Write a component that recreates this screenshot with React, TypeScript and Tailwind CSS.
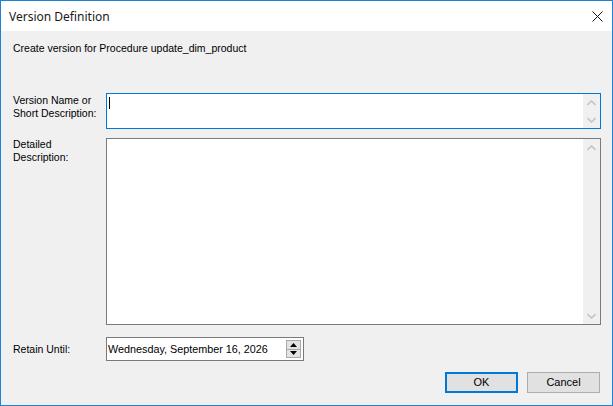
import React from "react";

function Chevron({ up }: { up?: boolean }) {
  return (
    <svg width="9" height="6" viewBox="0 0 9 6" className="block">
      <path
        d={up ? "M0.5 5 L4.5 1 L8.5 5" : "M0.5 1 L4.5 5 L8.5 1"}
        fill="none"
        stroke="#c5c5c5"
        strokeWidth="1.6"
      />
    </svg>
  );
}

function ScrollBar() {
  return (
    <div className="w-[17px] bg-[#f0f0f0] flex flex-col justify-between">
      <div className="h-[17px] flex items-center justify-center">
        <Chevron up />
      </div>
      <div className="h-[17px] flex items-center justify-center">
        <Chevron />
      </div>
    </div>
  );
}

export default function App() {
  return (
    <div className="w-[613px] h-[406px] flex flex-col border border-[#1883d7] bg-[#f0f0f0] text-black font-['Liberation_Sans',Arial,sans-serif] text-[10.5px] leading-[13px]">
      <div className="h-[30px] bg-white flex items-center justify-between pl-[8px] pr-[9px]">
        <span className="font-['Noto_Sans',sans-serif] text-[12px] text-[#1a1a1a]">
          Version Definition
        </span>
        <svg width="11" height="11" viewBox="0 0 11 11">
          <path d="M0.5 0.5 L10.5 10.5 M10.5 0.5 L0.5 10.5" stroke="#111" strokeWidth="1" />
        </svg>
      </div>

      <div className="flex flex-col pl-[12px]">
        <p className="mt-[11px]">Create version for Procedure update_dim_product</p>

        <div className="mt-[38px] flex">
          <div className="w-[93px] pt-[1px]">
            Version Name or
            <br />
            Short Description:
          </div>
          <div className="w-[495px] h-[36px] bg-white border border-[#0078d7] flex">
            <div className="flex-1 pl-[2px] pt-[3px]">
              <div className="w-px h-[12px] bg-black" />
            </div>
            <ScrollBar />
          </div>
        </div>

        <div className="mt-[9px] flex">
          <div className="w-[93px]">
            Detailed
            <br />
            Description:
          </div>
          <div className="w-[495px] h-[187px] bg-white border border-[#7a7a7a] flex">
            <div className="flex-1" />
            <ScrollBar />
          </div>
        </div>

        <div className="mt-[12px] flex items-center">
          <div className="w-[93px]">Retain Until:</div>
          <div className="w-[198px] h-[24px] bg-white border border-[#7a7a7a] flex items-center pl-[1px] pr-[2px]">
            <span className="flex-1 text-[10.8px]">Wednesday, September 16, 2026</span>
            <div className="w-[15px] h-[18px] border border-[#a8a8a8] flex flex-col">
              <div className="flex-1 bg-[#e3e3e3] border-b border-[#a8a8a8] flex items-center justify-center">
                <svg width="7" height="4" viewBox="0 0 7 4">
                  <path d="M0 4 L3.5 0 L7 4 Z" fill="#000" />
                </svg>
              </div>
              <div className="flex-1 bg-[#e3e3e3] flex items-center justify-center">
                <svg width="7" height="4" viewBox="0 0 7 4">
                  <path d="M0 0 L3.5 4 L7 0 Z" fill="#000" />
                </svg>
              </div>
            </div>
          </div>
        </div>

        <div className="mt-[11px] flex justify-end gap-[9px] w-[588px] pr-[1px]">
          <button className="w-[73px] h-[21px] bg-[#e1e1e1] border-2 border-[#0078d7] text-[11px] leading-none">
            OK
          </button>
          <button className="w-[73px] h-[21px] bg-[#e1e1e1] border border-[#adadad] text-[11px] leading-none">
            Cancel
          </button>
        </div>
      </div>
    </div>
  );
}
